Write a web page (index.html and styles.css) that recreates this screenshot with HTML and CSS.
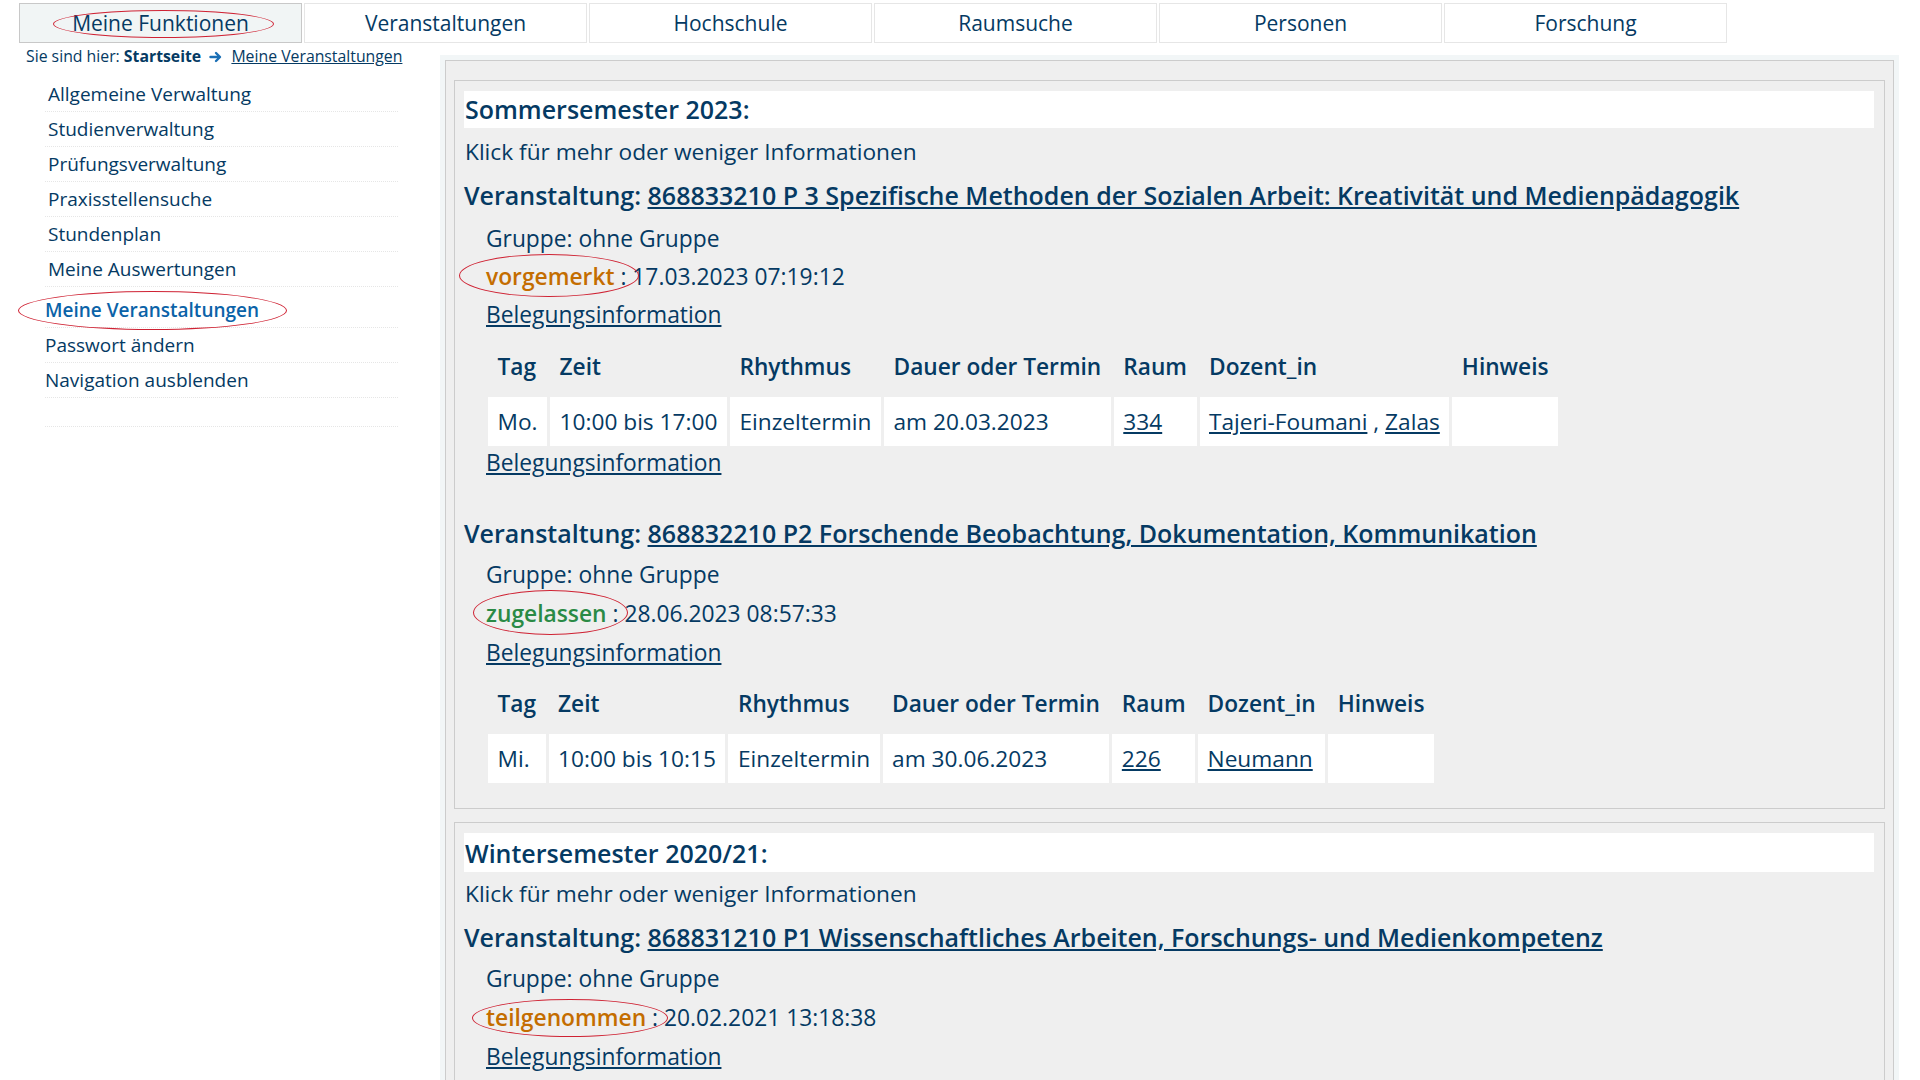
FILE: index.html
```html
<!DOCTYPE html>
<html lang="de">
<head>
    <meta charset="UTF-8">
    <meta name="viewport" content="width=device-width, initial-scale=1.0">
    <title>Meine Veranstaltungen</title>
    <link rel="stylesheet" href="styles.css">
</head>
<body>
    <nav class="tabs">
        <a class="tab active" href="#"><span class="circled circled-tab">Meine Funktionen</span></a>
        <a class="tab" href="#">Veranstaltungen</a>
        <a class="tab" href="#">Hochschule</a>
        <a class="tab" href="#">Raumsuche</a>
        <a class="tab" href="#">Personen</a>
        <a class="tab" href="#">Forschung</a>
    </nav>

    <div class="layout">
        <aside class="sidebar">
            <div class="breadcrumb">
                Sie sind hier: <b>Startseite</b>
                <svg class="crumb-arrow" width="14" height="12" viewBox="0 0 14 12"><path d="M1.5 6h9M7 2l4 4-4 4" fill="none" stroke="#1a6fb5" stroke-width="2.4" stroke-linecap="round" stroke-linejoin="round"/></svg>
                <a href="#">Meine Veranstaltungen</a>
            </div>
            <ul class="menu">
                <li><a href="#">Allgemeine Verwaltung</a></li>
                <li><a href="#">Studienverwaltung</a></li>
                <li><a href="#">Prüfungsverwaltung</a></li>
                <li><a href="#">Praxisstellensuche</a></li>
                <li><a href="#">Stundenplan</a></li>
                <li><a href="#">Meine Auswertungen</a></li>
                <li class="current"><a href="#"><span class="circled circled-menu">Meine Veranstaltungen</span></a></li>
                <li class="sub"><a href="#">Passwort ändern</a></li>
                <li class="sub"><a href="#">Navigation ausblenden</a></li>
                <li class="spacer"></li>
            </ul>
        </aside>

        <main class="content">
            <div class="box">
                <section class="semester">
                    <h2>Sommersemester 2023:</h2>
                    <div class="toggle">Klick für mehr oder weniger Informationen</div>

                    <div class="course">
                        <h3>Veranstaltung: <a href="#">868833210 P 3 Spezifische Methoden der Sozialen Arbeit: Kreativität und Medienpädagogik</a></h3>
                        <div class="details">
                            <div class="line">Gruppe: ohne Gruppe</div>
                            <div class="line"><span class="state pending circled circled-pending">vorgemerkt</span> : 17.03.2023 07:19:12</div>
                            <div class="line"><a href="#">Belegungsinformation</a></div>
                            <table class="dates">
                                <tr>
                                    <th>Tag</th><th>Zeit</th><th>Rhythmus</th><th>Dauer oder Termin</th><th>Raum</th><th>Dozent_in</th><th>Hinweis</th>
                                </tr>
                                <tr>
                                    <td>Mo.</td><td>10:00 bis 17:00</td><td>Einzeltermin</td><td>am 20.03.2023</td>
                                    <td><a href="#">334</a></td>
                                    <td><a href="#">Tajeri-Foumani</a> , <a href="#">Zalas</a></td>
                                    <td></td>
                                </tr>
                            </table>
                            <div class="line tight"><a href="#">Belegungsinformation</a></div>
                        </div>
                    </div>

                    <div class="course">
                        <h3>Veranstaltung: <a href="#">868832210 P2 Forschende Beobachtung, Dokumentation, Kommunikation</a></h3>
                        <div class="details">
                            <div class="line">Gruppe: ohne Gruppe</div>
                            <div class="line"><span class="state admitted circled circled-admitted">zugelassen</span> : 28.06.2023 08:57:33</div>
                            <div class="line"><a href="#">Belegungsinformation</a></div>
                            <table class="dates second">
                                <tr>
                                    <th>Tag</th><th>Zeit</th><th>Rhythmus</th><th>Dauer oder Termin</th><th>Raum</th><th>Dozent_in</th><th>Hinweis</th>
                                </tr>
                                <tr>
                                    <td>Mi.</td><td>10:00 bis 10:15</td><td>Einzeltermin</td><td>am 30.06.2023</td>
                                    <td><a href="#">226</a></td>
                                    <td><a href="#">Neumann</a></td>
                                    <td></td>
                                </tr>
                            </table>
                        </div>
                    </div>
                </section>

                <section class="semester">
                    <h2>Wintersemester 2020/21:</h2>
                    <div class="toggle">Klick für mehr oder weniger Informationen</div>

                    <div class="course">
                        <h3>Veranstaltung: <a href="#">868831210 P1 Wissenschaftliches Arbeiten, Forschungs- und Medienkompetenz</a></h3>
                        <div class="details">
                            <div class="line">Gruppe: ohne Gruppe</div>
                            <div class="line"><span class="state pending circled circled-done">teilgenommen</span> : 20.02.2021 13:18:38</div>
                            <div class="line"><a href="#">Belegungsinformation</a></div>
                        </div>
                    </div>
                </section>
            </div>
        </main>
    </div>
</body>
</html>
```

FILE: styles.css
```css
body {
    margin: 0;
    background-color: #fff;
    color: #053a63;
    font-family: "Open Sans", "Noto Sans", sans-serif;
    overflow: hidden;
}

a {
    color: #053a63;
}

/* top tabs */
.tabs {
    display: flex;
    gap: 2px;
    padding: 3px 0 0 19px;
}

.tab {
    box-sizing: border-box;
    width: 283px;
    height: 40px;
    display: flex;
    align-items: center;
    justify-content: center;
    border: 1px solid #e6e6e6;
    background-color: #fff;
    font-size: 21px;
    color: #053a63;
    text-decoration: none;
}

.tab.active {
    background-color: #f1f5f5;
    border-color: #c8c8c8;
}

/* red hand-drawn circles */
.circled {
    position: relative;
    display: inline-block;
    line-height: 28px;
}

.circled::after {
    content: "";
    position: absolute;
    border: 1.5px solid #cf2233;
    border-radius: 50%;
    pointer-events: none;
}

.circled-tab::after { left: -19px; right: -25px; top: 1px; bottom: -1px; }
.circled-menu::after { left: -27px; right: -28px; top: -5px; bottom: -6px; }
.circled-pending::after { left: -27px; right: -24px; top: -9px; bottom: -6px; }
.circled-admitted::after { left: -13px; right: -21px; top: -10px; bottom: -7px; }
.circled-done::after { left: -14px; right: -22px; top: -5px; bottom: -5px; }

.layout {
    display: flex;
    margin-top: 2px;
}

/* left column */
.sidebar {
    flex: none;
    width: 440px;
}

.breadcrumb {
    padding-left: 26px;
    font-size: 15.8px;
    line-height: 22px;
    height: 22px;
}

.breadcrumb b {
    font-weight: 700;
}

.crumb-arrow {
    margin: 0 4px;
    vertical-align: -1px;
}

.menu {
    list-style: none;
    margin: 10px 0 0 45px;
    padding: 0;
    width: 353px;
}

.menu li {
    border-bottom: 1px dotted #e6e6e6;
    line-height: 34px;
    font-size: 19px;
    padding-left: 3px;
}

.menu a {
    text-decoration: none;
}

.menu li.current {
    padding: 6px 0 0 0;
}

.menu li.current a {
    color: #0b63a8;
    font-weight: 600;
}

.menu li.sub {
    padding-left: 0;
}

.menu li.spacer {
    height: 28px;
}

/* main column */
.content {
    box-sizing: border-box;
    width: 1459px;
    min-height: 1025px;
    margin-top: 10px;
    padding: 5px 5px 0;
    background-color: #f2f6f7;
}

.box {
    min-height: 1100px;
    border: 1px solid #ccc;
    background-color: #efefef;
    padding: 19px 8px 20px;
}

.semester {
    border: 1px solid #ccc;
    background-color: #efefef;
    padding: 10px 10px 22px 9px;
    margin-bottom: 13px;
}

.semester h2 {
    margin: 0;
    height: 37px;
    line-height: 37px;
    padding-left: 1px;
    background-color: #fff;
    font-size: 25px;
    font-weight: 600;
}

.semester + .semester h2 {
    height: 39px;
    line-height: 40px;
}

.toggle {
    margin-top: 8px;
    padding-left: 1px;
    line-height: 32px;
    font-size: 22.7px;
}

.semester + .semester .toggle {
    margin-top: 6px;
}

.course h3 {
    margin: 9px 0 0;
    line-height: 36px;
    font-size: 25px;
    font-weight: 600;
}

.course + .course h3 {
    margin-top: 38px;
}

.details {
    padding-left: 22px;
    font-size: 22.8px;
}

.line {
    line-height: 34px;
    margin-top: 4px;
}

.line:first-child {
    margin-top: 9px;
}

.course + .course .line {
    margin-top: 5px;
}

.course + .course .line:first-child {
    margin-top: 7px;
}

.semester + .semester .line {
    margin-top: 5px;
}

.semester + .semester .line:first-child {
    margin-top: 7px;
}

.line.tight {
    margin-top: 0;
    line-height: 28px;
}

.state {
    font-weight: 600;
}

.state.pending {
    color: #c46d00;
}

.state.admitted {
    color: #2a8a45;
}

.dates {
    border-spacing: 3px;
    margin: 3px 0 0 -1px;
}

.dates.second {
    margin-top: 2px;
}

.dates th {
    height: 56px;
    padding: 0 9.5px;
    text-align: left;
    font-weight: 600;
    font-size: 22.7px;
}

.dates td {
    height: 49px;
    padding: 0 9.5px;
    background-color: #fff;
    font-size: 22.7px;
}
```
